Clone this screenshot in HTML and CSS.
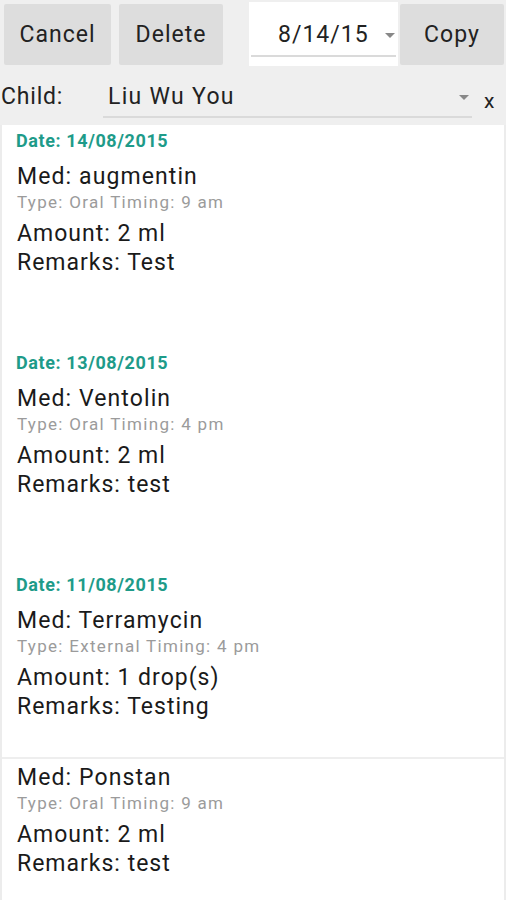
FILE: index.html
```html
<!DOCTYPE html>
<html>
<head>
  <meta charset="UTF-8">
  <title>Medication</title>
  <link rel="stylesheet" href="styles.css">
</head>
<body>
  <div class="toolbar">
    <div class="btn btn-cancel">Cancel</div>
    <div class="btn btn-delete">Delete</div>
    <div class="date-spinner">
      <span class="date-value">8/14/15</span>
      <span class="arrow"></span>
    </div>
    <div class="btn btn-copy">Copy</div>
  </div>

  <div class="child-row">
    <span class="child-label">Child:</span>
    <div class="child-spinner">
      <span class="child-name">Liu Wu You</span>
      <span class="arrow"></span>
    </div>
    <span class="clear">x</span>
  </div>

  <div class="list">
    <div class="group">
      <div class="group-date">Date: 14/08/2015</div>
      <div class="item">
        <div class="med">Med: augmentin</div>
        <div class="meta">Type: Oral Timing: 9 am</div>
        <div class="line">Amount: 2 ml</div>
        <div class="line">Remarks: Test</div>
      </div>
    </div>

    <div class="group">
      <div class="group-date">Date: 13/08/2015</div>
      <div class="item">
        <div class="med">Med: Ventolin</div>
        <div class="meta">Type: Oral Timing: 4 pm</div>
        <div class="line">Amount: 2 ml</div>
        <div class="line">Remarks: test</div>
      </div>
    </div>

    <div class="group">
      <div class="group-date">Date: 11/08/2015</div>
      <div class="item">
        <div class="med">Med: Terramycin</div>
        <div class="meta">Type: External Timing: 4 pm</div>
        <div class="line">Amount: 1 drop(s)</div>
        <div class="line">Remarks: Testing</div>
      </div>
      <div class="item">
        <div class="med">Med: Ponstan</div>
        <div class="meta">Type: Oral Timing: 9 am</div>
        <div class="line">Amount: 2 ml</div>
        <div class="line">Remarks: test</div>
      </div>
    </div>
  </div>
</body>
</html>
```

FILE: styles.css
```css
body {
  margin: 0;
  padding: 0;
  background-color: #efefef;
  font-family: Roboto, "Liberation Sans", sans-serif;
  color: #1a1a1a;
  height: 900px;
  overflow: hidden;
}

/* top bar */
.toolbar {
  display: flex;
  align-items: center;
  height: 68px;
  padding: 0 2px 0 4px;
}
.btn {
  height: 61px;
  background-color: #dddddd;
  border-radius: 2px;
  font-size: 23px;
  letter-spacing: 1px;
  display: flex;
  align-items: center;
  justify-content: center;
  color: #222;
}
.btn-cancel {
  width: 107px;
}
.btn-delete {
  width: 104px;
  margin-left: 8px;
}
.btn-copy {
  width: 104px;
  margin-left: 2px;
}
.date-spinner {
  width: 149px;
  height: 64px;
  margin-left: 26px;
  background-color: #fff;
  position: relative;
  display: flex;
  align-items: center;
  padding-left: 29px;
  box-sizing: border-box;
}
.date-spinner::after {
  content: "";
  position: absolute;
  left: 2px;
  right: 2px;
  top: 53px;
  height: 2px;
  background-color: #dadada;
}
.date-value {
  font-size: 23px;
  letter-spacing: 1px;
  color: #222;
}
.arrow {
  width: 0;
  height: 0;
  border-left: 5px solid transparent;
  border-right: 5px solid transparent;
  border-top: 5px solid #888;
}
.date-spinner .arrow {
  margin-left: 16px;
  margin-top: 2px;
}

/* child selector */
.child-row {
  display: flex;
  align-items: center;
  height: 57px;
}
.child-label {
  font-size: 23px;
  letter-spacing: 0.8px;
  margin-left: 1px;
  width: 102px;
  color: #222;
}
.child-spinner {
  width: 369px;
  height: 57px;
  display: flex;
  align-items: center;
  position: relative;
  box-sizing: border-box;
  padding-left: 5px;
}
.child-spinner::after {
  content: "";
  position: absolute;
  left: 0;
  right: 0;
  bottom: 7px;
  height: 2px;
  background-color: #dadada;
}
.child-name {
  font-size: 23px;
  letter-spacing: 1.3px;
  flex: 1;
  color: #222;
}
.child-spinner .arrow {
  margin-right: 3px;
  margin-top: 2px;
}
.clear {
  font-size: 21px;
  margin-left: 12px;
  margin-top: 8px;
  color: #222;
}

/* list */
.list {
  background-color: #fff;
  border-left: 2px solid #ececec;
  border-right: 2px solid #ececec;
  height: 775px;
}
.group {
  padding-bottom: 34px;
}
.group-date {
  color: #1e9b89;
  font-weight: bold;
  font-size: 18px;
  letter-spacing: 0.6px;
  line-height: 20px;
  padding: 6px 0 7px 14px;
}
.item {
  height: 155px;
  box-sizing: border-box;
  padding: 6px 0 0 15px;
}
.item + .item {
  border-top: 2px solid #eeeeee;
  height: 141px;
}
.med {
  font-size: 23px;
  letter-spacing: 1.1px;
  line-height: 26px;
}
.meta {
  font-size: 17px;
  letter-spacing: 1.3px;
  line-height: 24px;
  color: #9b9b9b;
}
.line {
  font-size: 23px;
  letter-spacing: 1px;
  line-height: 29px;
}
.meta + .line {
  margin-top: 5px;
}
```
